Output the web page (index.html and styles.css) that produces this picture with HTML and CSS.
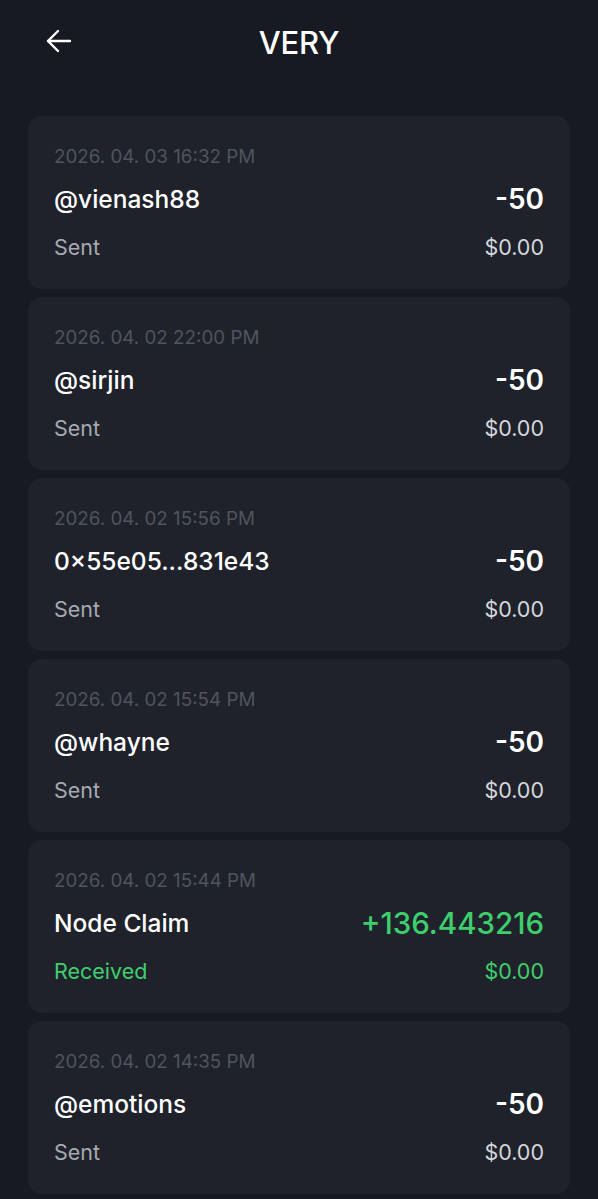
FILE: index.html
```html
<!DOCTYPE html>
<html lang="en">
<head>
  <meta charset="UTF-8" />
  <meta name="viewport" content="width=device-width, initial-scale=1.0"/>
  <title>VERY</title>
  <link rel="stylesheet" href="styles.css">
</head>
<body>

<div class="header">
  <a class="back" href="#">
    <svg width="30" height="30" viewBox="0 0 30 30" fill="none" stroke="#fff" stroke-width="2.4" stroke-linecap="round" stroke-linejoin="round">
      <path d="M26 15H4"/>
      <path d="M14 5L4 15l10 10"/>
    </svg>
  </a>
  <h1>VERY</h1>
</div>

<div class="list">
  <div class="card">
    <div class="date">2026. 04. 03 16:32 PM</div>
    <div class="row">
      <span class="name">@vienash88</span>
      <span class="amount">-50</span>
    </div>
    <div class="row">
      <span class="type">Sent</span>
      <span class="value">$0.00</span>
    </div>
  </div>

  <div class="card">
    <div class="date">2026. 04. 02 22:00 PM</div>
    <div class="row">
      <span class="name">@sirjin</span>
      <span class="amount">-50</span>
    </div>
    <div class="row">
      <span class="type">Sent</span>
      <span class="value">$0.00</span>
    </div>
  </div>

  <div class="card">
    <div class="date">2026. 04. 02 15:56 PM</div>
    <div class="row">
      <span class="name">0×55e05...831e43</span>
      <span class="amount">-50</span>
    </div>
    <div class="row">
      <span class="type">Sent</span>
      <span class="value">$0.00</span>
    </div>
  </div>

  <div class="card">
    <div class="date">2026. 04. 02 15:54 PM</div>
    <div class="row">
      <span class="name">@whayne</span>
      <span class="amount">-50</span>
    </div>
    <div class="row">
      <span class="type">Sent</span>
      <span class="value">$0.00</span>
    </div>
  </div>

  <div class="card received">
    <div class="date">2026. 04. 02 15:44 PM</div>
    <div class="row">
      <span class="name">Node Claim</span>
      <span class="amount">+136.443216</span>
    </div>
    <div class="row">
      <span class="type">Received</span>
      <span class="value">$0.00</span>
    </div>
  </div>

  <div class="card">
    <div class="date">2026. 04. 02 14:35 PM</div>
    <div class="row">
      <span class="name">@emotions</span>
      <span class="amount">-50</span>
    </div>
    <div class="row">
      <span class="type">Sent</span>
      <span class="value">$0.00</span>
    </div>
  </div>
</div>

</body>
</html>
```

FILE: styles.css
```css
body {
  font-family: Inter, "Noto Sans", sans-serif;
  background: #181a23;
  color: #fff;
  margin: 0;
  padding: 0;
  height: 1199px;
  overflow: hidden;
}

.header {
  position: relative;
  height: 84px;
  display: flex;
  align-items: center;
  justify-content: center;
}

.header h1 {
  margin: 0;
  font-size: 31px;
  font-weight: 500;
  letter-spacing: -0.2px;
}

.back {
  position: absolute;
  left: 44px;
  top: 26px;
  display: flex;
}

.list {
  display: flex;
  flex-direction: column;
  gap: 8px;
  padding: 32px 28px 0;
}

.card {
  background: #1f222b;
  border-radius: 14px;
  height: 173px;
  box-sizing: border-box;
  padding: 28px 26px 0;
}

.date {
  font-size: 18.8px;
  line-height: 25px;
  color: #50545e;
  margin-bottom: 15px;
}

.row {
  display: flex;
  justify-content: space-between;
  align-items: center;
}

.row + .row {
  margin-top: 18px;
}

.name {
  font-size: 24.5px;
  line-height: 31px;
  font-weight: 500;
}

.amount {
  font-size: 28px;
  line-height: 31px;
  font-weight: 600;
}

.type, .value {
  font-size: 21.5px;
  line-height: 28px;
  color: #a6a9b1;
}

.value {
  color: #d4d6db;
}

.received .type,
.received .value {
  color: #3fce6d;
}

.received .amount {
  color: #3fce6d;
  font-size: 29.5px;
  font-weight: 500;
}
```
